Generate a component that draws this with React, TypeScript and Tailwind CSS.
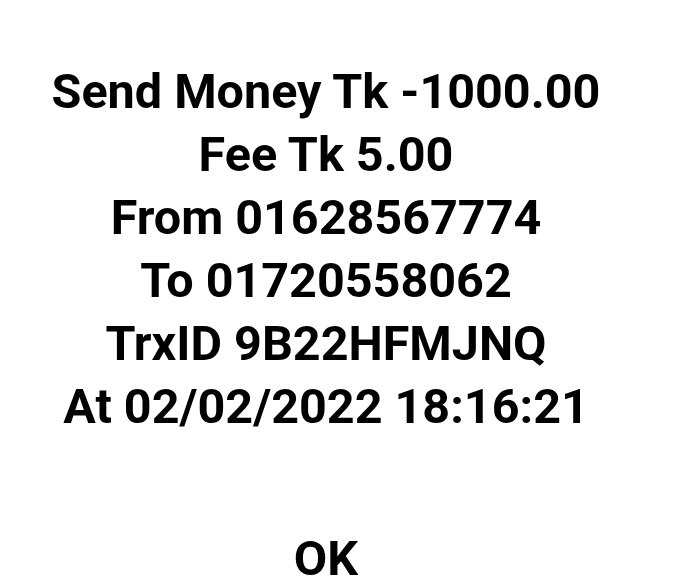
export default function App() {
  const lines = [
    "Send Money Tk -1000.00",
    "Fee Tk 5.00",
    "From 01628567774",
    "To 01720558062",
    "TrxID 9B22HFMJNQ",
    "At 02/02/2022 18:16:21",
  ];
  return (
    <div className="w-[674px] h-[586px] bg-white overflow-hidden font-['Roboto',sans-serif] text-black">
      <div className="flex flex-col items-center pt-[60px] pr-[22px] font-bold text-[48.5px] leading-[63px]">
        {lines.map((l) => (
          <div key={l} className="whitespace-nowrap">
            {l}
          </div>
        ))}
        <div className="mt-[97px] leading-[48px]">OK</div>
      </div>
    </div>
  );
}
